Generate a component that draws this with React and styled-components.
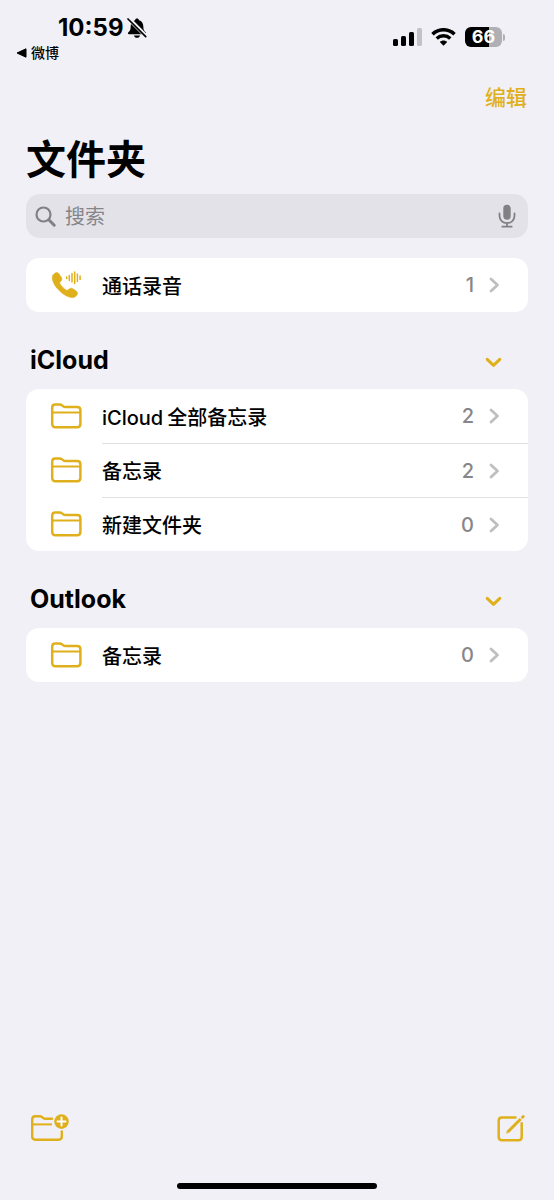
import React, { useState } from "react";
import styled, { createGlobalStyle } from "styled-components";

const ACCENT = "#e0b01c";

const GlobalStyle = createGlobalStyle`
  * {
    box-sizing: border-box;
  }
  body {
    margin: 0;
    background: #f1f0f6;
    color: #000;
    font-family: Inter, "Noto Sans CJK SC", sans-serif;
  }
  button {
    padding: 0;
    border: 0;
    background: none;
    color: inherit;
    font: inherit;
    cursor: pointer;
  }
  svg {
    display: block;
    flex-shrink: 0;
  }
`;

const Screen = styled.div`
  display: flex;
  flex-direction: column;
  min-height: 100vh;
`;

const StatusBar = styled.header`
  display: flex;
  justify-content: space-between;
  padding: 16px 49px 0 16px;
`;

const Clock = styled.div`
  display: flex;
  align-items: center;
  gap: 4px;
  padding-left: 42px;
  font-size: 24px;
  font-weight: 700;
  line-height: 24px;
`;

const BackLink = styled.a`
  display: flex;
  align-items: center;
  gap: 4px;
  margin-top: 3px;
  color: #000;
  font-size: 14px;
  font-weight: 500;
  line-height: 20px;
  text-decoration: none;
`;

const Indicators = styled.div`
  display: flex;
  align-items: center;
  gap: 9px;
  height: 42px;
`;

const Battery = styled.div`
  display: flex;
  align-items: center;
  gap: 1px;
`;

const BatteryBody = styled.div`
  width: 37px;
  height: 20px;
  border-radius: 6px;
  background: linear-gradient(to right, #000 66%, #b0b0b4 66%);
  color: #fff;
  font-size: 18px;
  font-weight: 700;
  line-height: 20px;
  text-align: center;
`;

const BatteryTip = styled.div`
  width: 2px;
  height: 7px;
  border-radius: 0 2px 2px 0;
  background: #b0b0b4;
`;

const NavBar = styled.nav`
  display: flex;
  justify-content: flex-end;
  padding: 20px 27px 0;
`;

const EditButton = styled.button`
  color: ${ACCENT};
  font-size: 21px;
  font-weight: 500;
  line-height: 30px;
`;

const Main = styled.main`
  flex: 1;
  padding: 20px 26px 0;
`;

const Title = styled.h1`
  margin: 0 0 7px;
  font-size: 40px;
  font-weight: 700;
  line-height: 54px;
`;

const SearchField = styled.label`
  display: flex;
  align-items: center;
  gap: 9px;
  height: 44px;
  margin-bottom: 20px;
  padding: 0 12px 0 9px;
  border-radius: 14px;
  background: #e3e2e8;
  color: #808085;
`;

const SearchInput = styled.input`
  flex: 1;
  min-width: 0;
  padding: 2px 0 0;
  border: 0;
  outline: 0;
  background: none;
  color: #000;
  font: inherit;
  font-size: 20px;
  line-height: 30px;

  &::placeholder {
    color: #85858a;
    opacity: 1;
  }
`;

const Section = styled.section`
  & + & {
    margin-top: 22px;
  }
`;

const SectionHeader = styled.div`
  display: flex;
  align-items: center;
  justify-content: space-between;
  height: 55px;
  padding: 0 26px 4px 4px;
`;

const SectionTitle = styled.h2`
  margin: 0;
  font-size: 25px;
  font-weight: 700;
  line-height: 30px;
`;

const Toggle = styled.button`
  padding-top: 6px;
  color: ${ACCENT};

  svg {
    transform: ${(props) => (props.$open ? "none" : "rotate(-90deg)")};
  }
`;

const List = styled.ul`
  margin: 0;
  padding: 0;
  border-radius: 13px;
  background: #fff;
  list-style: none;
  overflow: hidden;
`;

const Row = styled.a`
  display: flex;
  align-items: center;
  padding-left: 24px;
  color: #000;
  text-decoration: none;
`;

const RowIcon = styled.span`
  flex: 0 0 52px;
  color: ${ACCENT};
`;

const RowBody = styled.span`
  display: flex;
  flex: 1;
  align-items: center;
  gap: 15px;
  height: 54px;
  padding-right: 28px;
  font-size: 20px;
  font-weight: 500;

  li + li & {
    border-top: 1px solid #e0e0e2;
  }
`;

const RowName = styled.span`
  flex: 1;
`;

const Brand = styled.span`
  margin-right: 4px;
`;

const Count = styled.span`
  color: #87878a;
`;

const Toolbar = styled.footer`
  display: flex;
  align-items: center;
  justify-content: space-between;
  padding: 0 29px 0 30px;
  color: ${ACCENT};
`;

const HomeIndicator = styled.div`
  width: 36%;
  height: 6px;
  margin: 41px auto 11px;
  border-radius: 3px;
  background: #000;
`;

const BellOffIcon = () => (
  <svg width="20" height="22" viewBox="0 0 20 22">
    <path
      d="M10 1.5c-1 0-1.800.7-2 1.700C5.200 4 3.700 6.200 3.700 9.200c0 3.300-.8 4.600-2.300 6-.9.900-.5 2 .7 2h15.800c1.200 0 1.600-1.100.7-2-1.500-1.400-2.300-2.700-2.300-6 0-3-1.500-5.200-4.300-6-.2-1-1-1.700-2-1.700z"
      fill="#000"
    />
    <path d="M7 18.500h6c-.3 1.400-1.500 2.300-3 2.300s-2.700-.9-3-2.300z" fill="#000" />
    <path d="M1.500 1.500l17.500 17.500" stroke="#f1f0f6" strokeWidth="4" />
    <path d="M1 2l17.700 17.700" stroke="#000" strokeWidth="1.700" strokeLinecap="round" />
  </svg>
);

const SignalIcon = () => (
  <svg width="29" height="18" viewBox="0 0 29 18">
    <rect x="0" y="11" width="5" height="7" rx="1.500" />
    <rect x="8" y="8" width="5" height="10" rx="1.500" />
    <rect x="16" y="4" width="5" height="14" rx="1.500" />
    <rect x="24" y="0" width="5" height="18" rx="1.500" fill="#c2c2c6" />
  </svg>
);

const WifiIcon = () => (
  <svg width="25" height="18" viewBox="0 0 25 18" fill="none" stroke="#000">
    <path d="M1.500 6.200C7.700.3 17.300.3 23.500 6.200" strokeWidth="3.600" />
    <path d="M5.700 10.500c3.900-3.600 9.700-3.600 13.600 0" strokeWidth="3.400" />
    <path d="M12.500 17.800l-3.700-3.800c2.100-2 5.300-2 7.400 0z" fill="#000" stroke="none" />
  </svg>
);

const SearchIcon = () => (
  <svg width="21" height="21" viewBox="0 0 21 21" fill="none" stroke="currentColor">
    <circle cx="8.500" cy="8.500" r="7" strokeWidth="2.200" />
    <path d="M13.800 13.800l5.400 5.400" strokeWidth="3" strokeLinecap="round" />
  </svg>
);

const MicIcon = () => (
  <svg width="18" height="24" viewBox="0 0 18 24" fill="none" stroke="currentColor">
    <rect x="5.300" y="0.800" width="7.400" height="15" rx="3.700" fill="currentColor" stroke="none" />
    <path
      d="M1.500 9.500v2.300c0 4.400 3.200 7.300 7.500 7.300s7.500-2.900 7.500-7.300V9.500M9 19v3.500M4.300 22.700h9.400"
      strokeWidth="1.800"
      strokeLinecap="round"
    />
  </svg>
);

const CallIcon = () => (
  <svg width="32" height="30" viewBox="0 0 32 30">
    <path
      d="M4.300 5.200C5.800 3.600 7.800 3.800 9 5.400l2.300 3.300c.9 1.300.8 2.600-.3 3.800l-1 1.100c-.4.500-.4 1-.1 1.600 1.400 2.400 4 5 6.400 6.400.6.300 1.100.3 1.600-.1l1.200-1c1.200-1 2.500-1.100 3.800-.2l3.300 2.300c1.600 1.200 1.800 3 .3 4.500l-.9.800c-1.700 1.500-4.200 1.600-7.700.2-3-1.200-5.900-3.200-8.700-6-2.800-2.900-4.800-5.700-6-8.700-1.300-3.400-1.300-5.800.2-7.300z"
      transform="translate(0 -1.500)"
      fill="currentColor"
      stroke="currentColor"
      strokeWidth=".6"
    />
    <path
      d="M16.700 7v1.500M19.300 5.500v5M22 3.500v8.500M24.700 2v11.500M27.400 4v7.500M30.100 6v3.500"
      stroke="currentColor"
      strokeWidth="1.500"
      strokeLinecap="round"
    />
  </svg>
);

const FolderIcon = () => (
  <svg width="32" height="26" viewBox="0 0 32 26" fill="none" stroke="currentColor">
    <path
      d="M2.200 21V4.500c0-1.900 1.100-3 3-3h4.300c1.100 0 1.800.2 2.600.9l.9.700c.8.700 1.400.9 2.500.9h11.700c2 0 3.200 1.100 3.200 3.200V21c0 2-1.200 3.200-3.200 3.200H5.400C3.300 24.200 2.200 23 2.200 21z"
      strokeWidth="2.500"
    />
    <path d="M2 9.500h28" strokeWidth="2" />
  </svg>
);

const NewFolderIcon = () => (
  <svg width="40" height="28" viewBox="0 0 40 28" fill="none" stroke="currentColor">
    <path
      d="M22 4.800h-6.500c-1.100 0-1.700-.2-2.500-.9l-.8-.7c-.8-.6-1.500-.9-2.600-.9H5.400c-2 0-3.200 1.200-3.200 3.200v17c0 2 1.200 3.200 3.200 3.200h23.200c2 0 3.200-1.200 3.200-3.200V17.500"
      strokeWidth="2.400"
      strokeLinecap="round"
    />
    <path d="M2.200 10.400H22" strokeWidth="2" />
    <circle cx="31.500" cy="7.600" r="7.300" fill="currentColor" stroke="none" />
    <path d="M31.500 3.600v8M27.500 7.600h8" stroke="#fff" strokeWidth="2" strokeLinecap="round" />
  </svg>
);

const ComposeIcon = () => (
  <svg width="28" height="28" viewBox="0 0 28 28" fill="none" stroke="currentColor">
    <path
      d="M18.500 3.500H5C3 3.500 1.700 4.700 1.700 6.700V23c0 2 1.300 3.200 3.300 3.200h16.500c2 0 3.200-1.200 3.200-3.200V9.200"
      strokeWidth="2.500"
      strokeLinecap="round"
    />
    <path d="M11.500 17.200L23.700 5" strokeWidth="3" />
    <path d="M10.500 15.900l2.200 2.200-3.200 1.200z" fill="currentColor" strokeWidth=".5" />
    <path d="M25.500 3.200l.7-.7" strokeWidth="3" strokeLinecap="round" />
  </svg>
);

const ChevronRight = () => (
  <svg width="11" height="16" viewBox="0 0 11 16" fill="none" stroke="#bfbfc2">
    <path d="M2 2l6.500 6L2 14" strokeWidth="2.800" strokeLinecap="round" strokeLinejoin="round" />
  </svg>
);

const ChevronDown = () => (
  <svg width="17" height="11" viewBox="0 0 17 11" fill="none" stroke="currentColor">
    <path d="M2.200 2.400l6.300 6 6.300-6" strokeWidth="3" strokeLinecap="round" strokeLinejoin="round" />
  </svg>
);

const accounts = [
  {
    name: "iCloud",
    folders: [
      { id: "all", brand: "iCloud", name: "全部备忘录", count: 2 },
      { id: "notes", name: "备忘录", count: 2 },
      { id: "new", name: "新建文件夹", count: 0 },
    ],
  },
  {
    name: "Outlook",
    folders: [{ id: "outlook-notes", name: "备忘录", count: 0 }],
  },
];

const FolderRow = ({ id, brand, name, count, icon }) => (
  <li>
    <Row href={`#${id}`}>
      <RowIcon>{icon || <FolderIcon />}</RowIcon>
      <RowBody>
        <RowName>
          {brand && <Brand>{brand}</Brand>}
          {name}
        </RowName>
        <Count>{count}</Count>
        <ChevronRight />
      </RowBody>
    </Row>
  </li>
);

const Account = ({ name, folders }) => {
  const [open, setOpen] = useState(true);

  return (
    <Section>
      <SectionHeader>
        <SectionTitle>{name}</SectionTitle>
        <Toggle $open={open} aria-label={name} aria-expanded={open} onClick={() => setOpen(!open)}>
          <ChevronDown />
        </Toggle>
      </SectionHeader>
      {open && (
        <List>
          {folders.map((folder) => (
            <FolderRow key={folder.id} {...folder} />
          ))}
        </List>
      )}
    </Section>
  );
};

const App = () => (
  <Screen lang="zh-CN">
    <GlobalStyle />
    <StatusBar>
      <div>
        <Clock>
          10:59
          <BellOffIcon />
        </Clock>
        <BackLink href="#back">
          <svg width="11" height="10" viewBox="0 0 11 10">
            <path d="M10 .8v8.400L1 5z" stroke="#000" strokeLinejoin="round" />
          </svg>
          微博
        </BackLink>
      </div>
      <Indicators>
        <SignalIcon />
        <WifiIcon />
        <Battery>
          <BatteryBody>66</BatteryBody>
          <BatteryTip />
        </Battery>
      </Indicators>
    </StatusBar>
    <NavBar>
      <EditButton>编辑</EditButton>
    </NavBar>
    <Main>
      <Title>文件夹</Title>
      <SearchField>
        <SearchIcon />
        <SearchInput type="search" placeholder="搜索" aria-label="搜索" />
        <MicIcon />
      </SearchField>
      <Section>
        <List>
          <FolderRow id="calls" name="通话录音" count={1} icon={<CallIcon />} />
        </List>
      </Section>
      {accounts.map((account) => (
        <Account key={account.name} {...account} />
      ))}
    </Main>
    <Toolbar>
      <button aria-label="新建文件夹">
        <NewFolderIcon />
      </button>
      <button aria-label="新建备忘录">
        <ComposeIcon />
      </button>
    </Toolbar>
    <HomeIndicator />
  </Screen>
);

export default App;
